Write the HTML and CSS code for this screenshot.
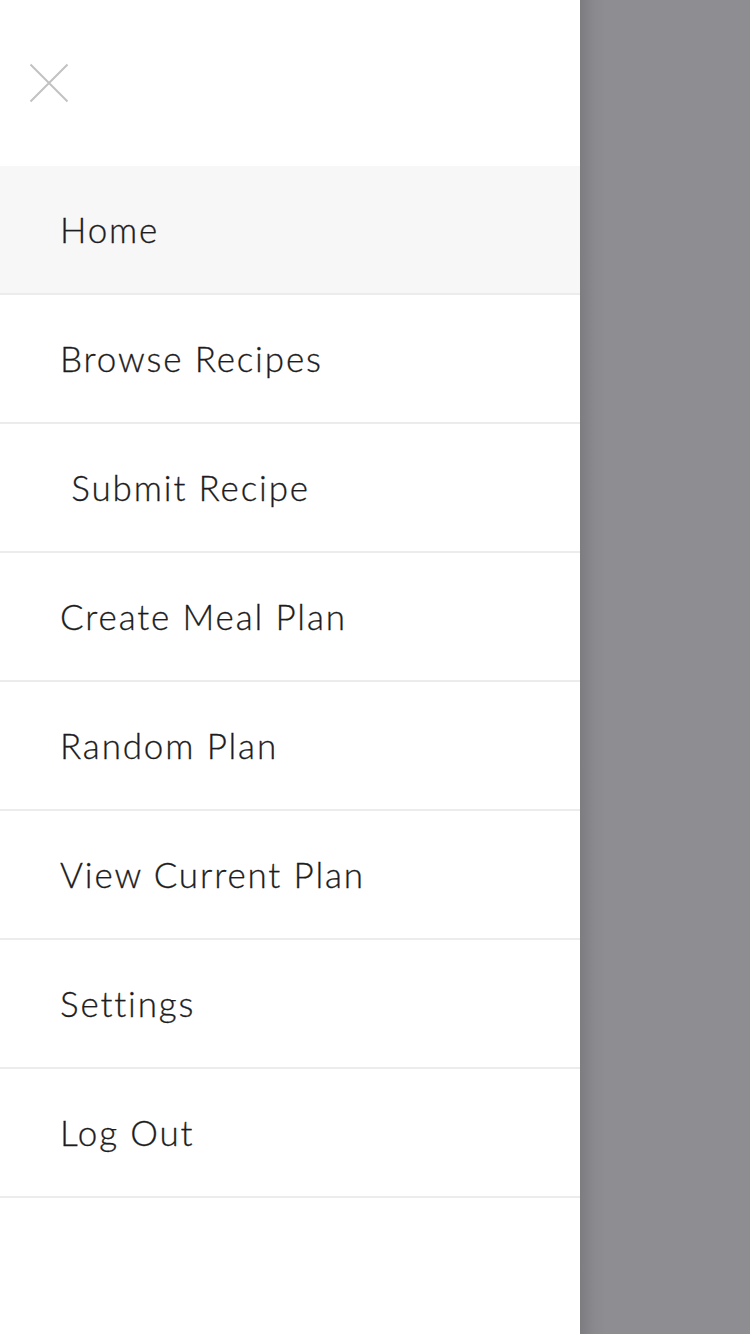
FILE: index.html
```html
<!DOCTYPE html>
<html>
<head>
<meta charset="utf-8">
<link rel="stylesheet" href="styles.css">
</head>
<body>
<div class="screen">
  <nav class="drawer">
    <div class="drawer-head">
      <svg class="close" width="40" height="40" viewBox="0 0 40 40">
        <path d="M1.5 1.5 L38.5 38.5 M38.5 1.5 L1.5 38.5" stroke="#c2c2c2" stroke-width="2" fill="none"/>
      </svg>
    </div>
    <ul class="menu">
      <li class="item active">Home</li>
      <li class="item">Browse Recipes</li>
      <li class="item">&nbsp;Submit Recipe</li>
      <li class="item">Create Meal Plan</li>
      <li class="item">Random Plan</li>
      <li class="item">View Current Plan</li>
      <li class="item">Settings</li>
      <li class="item">Log Out</li>
    </ul>
  </nav>
  <div class="overlay"></div>
</div>
</body>
</html>
```
FILE: styles.css
```css
html, body {
  margin: 0;
  padding: 0;
}
body {
  font-family: "Lato", "Open Sans", sans-serif;
}
.screen {
  width: 750px;
  height: 1334px;
  display: flex;
  overflow: hidden;
}
.drawer {
  width: 580px;
  flex: none;
  background: #fff;
  height: 100%;
}
.drawer-head {
  height: 166px;
  box-sizing: border-box;
  padding: 63px 0 0 29px;
}
.close {
  display: block;
}
.menu {
  list-style: none;
  margin: 0;
  padding: 0;
}
.item {
  border-bottom: 2px solid #ececec;
  display: flex;
  align-items: center;
  padding-left: 60px;
  font-size: 35px;
  letter-spacing: 1.85px;
  color: #1c1c21;
  font-weight: 300;
  -webkit-text-stroke: 0.3px #1c1c21;
  padding-bottom: 2px;
  box-sizing: border-box;
  height: 129px;
}
.item.active {
  background: #f7f7f7;
}
.overlay {
  flex: 1;
  height: 100%;
  background: linear-gradient(to right, #7d7c81 0px, #8a898e 14px, #8e8d92 26px, #8e8d92 100%);
}
```
